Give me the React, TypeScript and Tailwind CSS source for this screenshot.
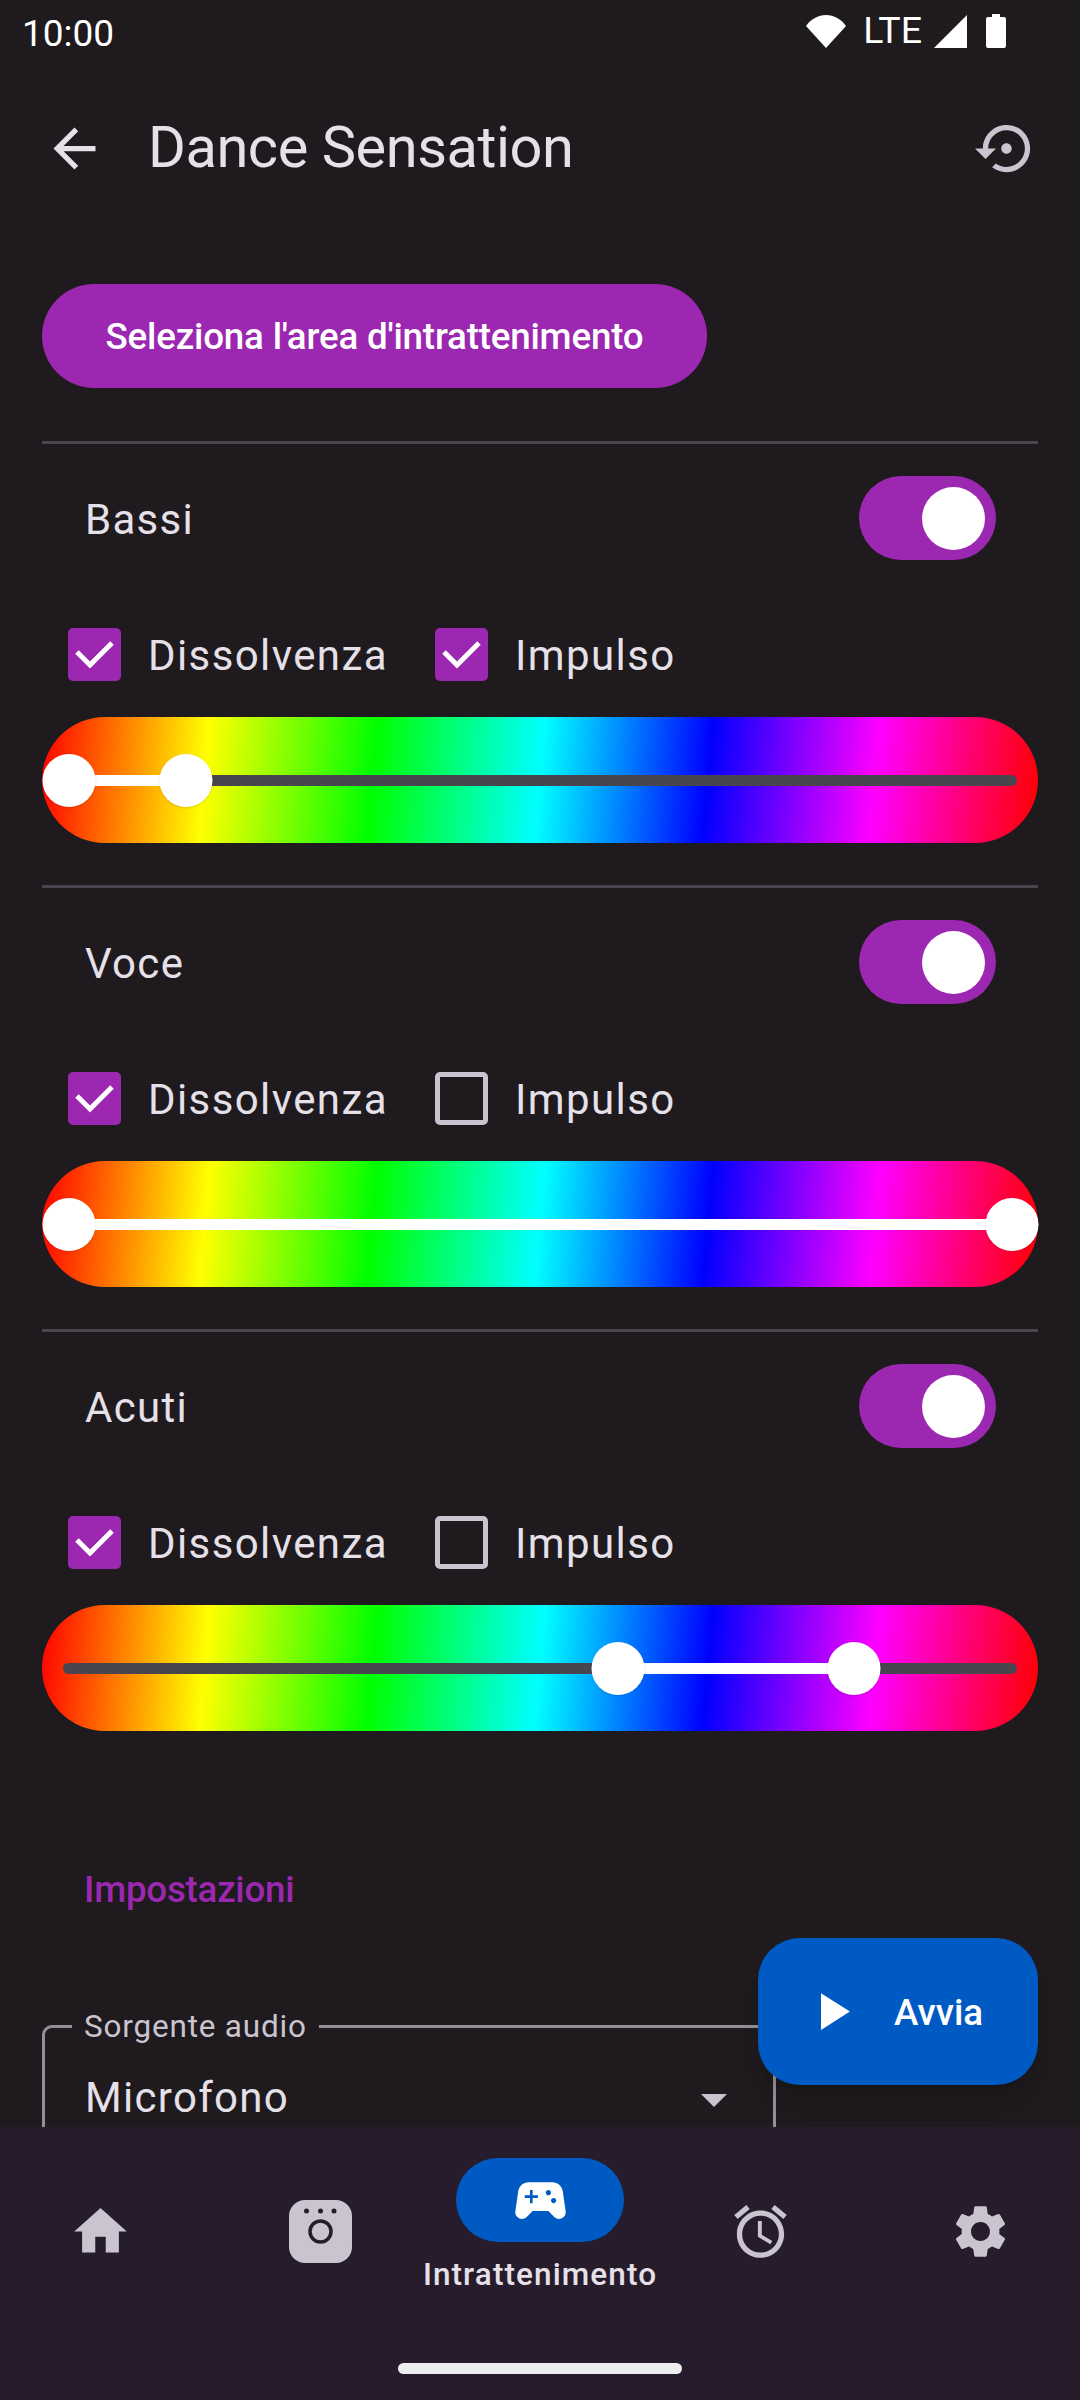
const iconColor = '#cac4d0';

const sections = [
  { name: 'Bassi', fade: true, pulse: true, low: 0, high: 0.125 },
  { name: 'Voce', fade: true, pulse: false, low: 0, high: 1 },
  { name: 'Acuti', fade: true, pulse: false, low: 0.583, high: 0.833 },
];

const navIcons: Record<string, string> = {
  home: 'M10 20v-6h4v6h5v-8h3L12 3 2 12h3v8z',
  alarm:
    'M22 5.72l-4.6-3.86-1.29 1.53 4.6 3.86L22 5.72zM7.88 3.39L6.6 1.86 2 5.71l1.29 1.53 4.59-3.85zM12.5 8H11v6l4.75 2.85.75-1.23-4-2.37V8zM12 4c-4.97 0-9 4.03-9 9s4.02 9 9 9c4.97 0 9-4.03 9-9s-4.03-9-9-9zm0 16c-3.87 0-7-3.13-7-7s3.13-7 7-7 7 3.13 7 7-3.13 7-7 7z',
  settings:
    'M19.14 12.94c.04-.3.06-.61.06-.94 0-.32-.02-.64-.07-.94l2.03-1.58c.18-.14.23-.41.12-.61l-1.92-3.32c-.12-.22-.37-.29-.59-.22l-2.39.96c-.5-.38-1.03-.7-1.62-.94L14.4 2.81c-.04-.24-.24-.41-.48-.41h-3.84c-.24 0-.43.17-.47.41L9.25 5.35c-.59.24-1.13.57-1.62.94L5.24 5.33c-.22-.08-.47 0-.59.22L2.74 8.87c-.12.21-.08.47.12.61l2.03 1.58c-.05.3-.09.63-.09.94s.02.64.07.94l-2.03 1.58c-.18.14-.23.41-.12.61l1.92 3.32c.12.22.37.29.59.22l2.39-.96c.5.38 1.03.7 1.62.94l.36 2.54c.05.24.24.41.48.41h3.84c.24 0 .44-.17.47-.41l.36-2.54c.59-.24 1.13-.56 1.62-.94l2.39.96c.22.08.47 0 .59-.22l1.92-3.32c.12-.22.07-.47-.12-.61l-2.01-1.58zM12 15.6c-1.98 0-3.6-1.62-3.6-3.6s1.62-3.6 3.6-3.6 3.6 1.62 3.6 3.6-1.62 3.6-3.6 3.6z',
  game:
    'M21.58 16.09l-1.09-7.66C20.21 6.46 18.52 5 16.53 5H7.47C5.48 5 3.79 6.46 3.51 8.43l-1.09 7.66C2.2 17.63 3.39 19 4.94 19c.68 0 1.32-.27 1.8-.75L9 16h6l2.25 2.25c.48.48 1.13.75 1.8.75 1.56 0 2.75-1.37 2.53-2.91zM11 11H9v2H8v-2H6v-1h2V8h1v2h2v1zm4-1c-.55 0-1-.45-1-1s.45-1 1-1 1 .45 1 1-.45 1-1 1zm2 3c-.55 0-1-.45-1-1s.45-1 1-1 1 .45 1 1-.45 1-1 1z',
};

function Icon({ d, color = iconColor }: { d: string; color?: string }) {
  return (
    <svg width="63" height="63" viewBox="0 0 24 24" fill={color} className="shrink-0">
      <path d={d} />
    </svg>
  );
}

function StatusBar() {
  return (
    <div className="flex h-[62px] items-center justify-between pl-[22px] pr-[74px] text-white">
      <span className="pt-[4px] text-[37px] leading-none">10:00</span>
      <div className="flex items-center">
        <svg width="40" height="33" viewBox="0 0 40 33" fill="white">
          <path d="M0 11C5 4 12 0 20 0s15 4 20 11L20 33z" />
        </svg>
        <span className="ml-[17px] text-[37.5px] leading-none">LTE</span>
        <svg width="33" height="33" viewBox="0 0 33 33" fill="white" className="ml-[12px]">
          <path d="M33 0v33H0z" />
        </svg>
        <svg width="20" height="34" viewBox="0 0 20 34" fill="white" className="ml-[19px]">
          <path d="M6 0h8v3h4a2 2 0 0 1 2 2v27a2 2 0 0 1-2 2H2a2 2 0 0 1-2-2V5a2 2 0 0 1 2-2h4z" />
        </svg>
      </div>
    </div>
  );
}

function Toolbar() {
  return (
    <div className="flex h-[172px] items-center justify-between pl-[43px] pr-[42px]">
      <div className="flex items-center gap-[42px]">
        <Icon d="M20 11H7.83l5.59-5.59L12 4l-8 8 8 8 1.41-1.41L7.83 13H20v-2z" color="#e6e0e9" />
        <span className="text-[57.75px] leading-none tracking-[-0.45px] text-[#e6e0e9]">Dance Sensation</span>
      </div>
      <Icon d="M14 12c0-1.1-.9-2-2-2s-2 .9-2 2 .9 2 2 2 2-.9 2-2zm-2-9c-4.97 0-9 4.03-9 9H0l4 4 4-4H5c0-3.87 3.13-7 7-7s7 3.13 7 7-3.13 7-7 7c-1.51 0-2.91-.49-4.06-1.3l-1.42 1.44C8.04 20.3 9.94 21 12 21c4.97 0 9-4.03 9-9s-4.03-9-9-9z" />
    </div>
  );
}

function Check({ checked, label, className }: { checked: boolean; label: string; className?: string }) {
  return (
    <div className={`flex items-center gap-[27px] ${className ?? ''}`}>
      {checked ? (
        <svg width="53" height="53" viewBox="0 0 53 53" className="shrink-0">
          <rect width="53" height="53" rx="5" fill="#9c27b0" />
          <path d="M9 24l13 13L44 15" fill="none" stroke="white" strokeWidth="5" />
        </svg>
      ) : (
        <div className="size-[53px] shrink-0 rounded-[5px] border-[5px] border-[#cac4d0]" />
      )}
      <span className="pt-[3px] text-[42px] leading-none tracking-[1.4px] text-[#e6e0e9]">{label}</span>
    </div>
  );
}

function RangeSlider({ low, high }: { low: number; high: number }) {
  const pos = (v: number) => 26.5 + v * 943;
  return (
    <div className="relative h-[126px] rounded-full bg-[linear-gradient(95deg,#ff0000,#ffff00,#00ff00,#00ffff,#0000ff,#ff00ff,#ff0000)]">
      <div className="absolute left-[21px] right-[21px] top-[58px] h-[11px] rounded-full bg-[#49454f]" />
      <div
        className="absolute top-[58px] h-[11px] bg-white"
        style={{ left: pos(low), width: pos(high) - pos(low) }}
      />
      {[low, high].map((v, i) => (
        <div
          key={i}
          className="absolute top-[37px] size-[53px] -translate-x-1/2 rounded-full bg-white shadow-sm"
          style={{ left: pos(v) }}
        />
      ))}
    </div>
  );
}

function Section({ name, fade, pulse, low, high }: (typeof sections)[number]) {
  return (
    <section className="mb-[42px] border-t-[3px] border-[#49454f] pt-[32px]">
      <div className="flex h-[84px] items-center justify-between pl-[43px] pr-[42px]">
        <span className="pt-[3px] text-[42px] leading-none tracking-[1.3px] text-[#e6e0e9]">{name}</span>
        <div className="flex h-[84px] w-[137px] items-center justify-end rounded-full bg-[#9c27b0] pr-[11px]">
          <div className="size-[63px] rounded-full bg-white" />
        </div>
      </div>
      <div className="mt-[68px] flex pl-[26px]">
        <Check checked={fade} label="Dissolvenza" className="w-[367px]" />
        <Check checked={pulse} label="Impulso" />
      </div>
      <div className="mt-[36px]">
        <RangeSlider low={low} high={high} />
      </div>
    </section>
  );
}

function AudioField() {
  return (
    <div className="relative mt-[113px] h-[200px] w-[734px] rounded-[10px] border-[3px] border-[#938f99]">
      <span className="absolute left-[27px] top-[-19px] bg-[#1e1a1d] px-[12px] text-[31.5px] leading-[36px] tracking-[0.8px] text-[#cac4d0]">
        Sorgente audio
      </span>
      <div className="flex h-[136px] items-center justify-between pl-[40px] pr-[46px]">
        <span className="pt-[3px] text-[42px] leading-none tracking-[1.3px] text-[#e6e0e9]">Microfono</span>
        <svg width="26" height="13" viewBox="0 0 26 13" fill={iconColor} className="mt-[8px]">
          <path d="M0 0h26L13 13z" />
        </svg>
      </div>
    </div>
  );
}

function NavBar() {
  return (
    <nav className="relative z-10 h-[273px] overflow-hidden bg-[#261c2b] pt-[31px]">
      <div className="ml-[-10px] grid h-[146px] w-[1100px] grid-cols-5 items-center justify-items-center">
        <Icon d={navIcons.home} />
        <svg width="63" height="63" viewBox="0 0 63 63">
          <rect width="63" height="63" rx="16" fill={iconColor} />
          <circle cx="17.5" cy="11" r="2.5" fill="#261c2b" />
          <circle cx="31.5" cy="11" r="2.5" fill="#261c2b" />
          <circle cx="45" cy="11" r="2.5" fill="#261c2b" />
          <circle cx="31.5" cy="31.5" r="10.5" fill="none" stroke="#261c2b" strokeWidth="3.5" />
        </svg>
        <div className="flex flex-col items-center self-start">
          <div className="flex h-[84px] w-[168px] items-center justify-center rounded-full bg-[#005ac4]">
            <Icon d={navIcons.game} color="white" />
          </div>
          <span className="mt-[12px] text-[31.5px] font-medium leading-[42px] tracking-[1.1px] text-[#e6e0e9]">
            Intrattenimento
          </span>
        </div>
        <Icon d={navIcons.alarm} />
        <Icon d={navIcons.settings} />
      </div>
      <div className="mx-auto mt-[59px] h-[11px] w-[284px] rounded-full bg-[#eeeeee]" />
    </nav>
  );
}

export default function App() {
  return (
    <div className="relative flex h-[2400px] w-[1080px] flex-col overflow-hidden bg-[#1e1a1d] font-[Roboto,sans-serif]">
      <main className="h-[2127px] overflow-hidden">
        <StatusBar />
        <Toolbar />
        <div className="px-[42px] pt-[50px]">
          <button className="flex h-[104px] w-[665px] items-center justify-center rounded-full bg-[#9c27b0] pt-[3px] text-[36.75px] font-medium leading-none tracking-[-0.2px] text-white">
            Seleziona l'area d'intrattenimento
          </button>
          <div className="mt-[53px]">
            {sections.map((s) => (
              <Section key={s.name} {...s} />
            ))}
          </div>
          <h2 className="ml-[42px] mt-[137px] text-[36.75px] font-medium leading-[44px] tracking-[-0.25px] text-[#9c27b0]">
            Impostazioni
          </h2>
          <AudioField />
        </div>
      </main>
      <NavBar />
      <button className="absolute bottom-[315px] right-[42px] flex h-[147px] w-[280px] items-center rounded-[42px] bg-[#005ac4] pl-[42px] text-[36.75px] font-medium leading-none text-white shadow-xl">
        <svg width="63" height="63" viewBox="0 0 24 24" fill="white" className="shrink-0">
          <path d="M8 5v14l11-7z" />
        </svg>
        <span className="ml-[31px] pt-[3px]">Avvia</span>
      </button>
    </div>
  );
}
